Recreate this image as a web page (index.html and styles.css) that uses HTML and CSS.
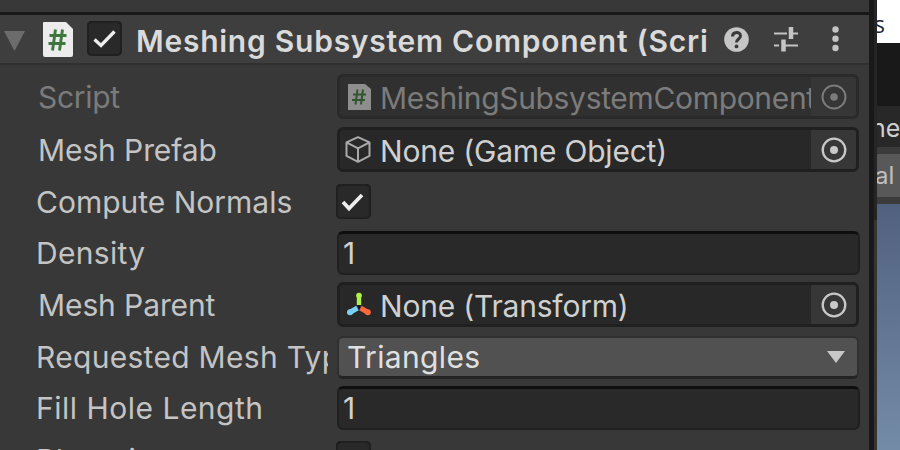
FILE: index.html
```html
<!DOCTYPE html>
<html lang="en">
<head>
<meta charset="utf-8">
<title>Inspector</title>
<link rel="stylesheet" href="styles.css">
</head>
<body>
<div class="app">
  <main class="inspector">
    <header class="head">
      <svg class="fold" width="22" height="20" viewBox="0 0 22 20"><path d="M0 0h21L10.500 20z" fill="#6c6c6c"/></svg>
      <svg class="file" width="30" height="35" viewBox="0 0 30 35"><path d="M1 0h22l7 7v26q0 2-2 2H2q-2 0-2-2V1q0-1 1-1z" fill="#ececec"/><path d="M12.500 7.500l-3 21M19.500 7.500l-3 21M6.500 13.500h17M5.500 21.500h17" stroke="#40753f" stroke-width="2.900"/></svg>
      <span class="check"><svg width="35" height="35" viewBox="0 0 35 35"><path d="M7.500 18.500l6.500 6 13.500-14" fill="none" stroke="#eee" stroke-width="3.300"/></svg></span>
      <h1 class="title">Meshing Subsystem Component (Scri</h1>
      <svg class="help" width="25" height="25" viewBox="0 0 25 25"><circle cx="12.500" cy="12.500" r="12.300" fill="#c6c6c6"/><path d="M8.500 9.500c0-5 8-5.500 8-.7 0 3.200-4 3.200-4 6.700" fill="none" stroke="#3b3b3b" stroke-width="3"/><circle cx="12.500" cy="19.400" r="1.900" fill="#3b3b3b"/></svg>
      <svg class="sliders" width="25" height="25" viewBox="0 0 25 25"><path d="M0 6.500h13M17 6.500h7M0 18.500h5M9 18.500h15" stroke="#c4c4c4" stroke-width="2"/><path d="M17 0v12M9.500 12.500v12" stroke="#c4c4c4" stroke-width="4.500"/></svg>
      <svg class="more" width="7" height="26" viewBox="0 0 7 26"><g fill="#c4c4c4"><circle cx="3.500" cy="3.500" r="3.200"/><circle cx="3.500" cy="12.800" r="3.200"/><circle cx="3.500" cy="22" r="3.200"/></g></svg>
    </header>
    <section class="rows">
      <div class="row disabled"><label class="label l-script">Script</label>
        <div class="field object"><svg class="icon i-file" width="23" height="26" viewBox="0 0 23 26"><path d="M0 0h17l6 5v21H0z" fill="#8e8e8e"/><path d="M9.500 5.500l-2 15M15 5.500l-2 15M5 10.500h13M4 16h13" stroke="#31562f" stroke-width="2"/></svg><span class="value v-script">MeshingSubsystemComponent</span><span class="pick"><svg width="26" height="26" viewBox="0 0 26 26"><circle cx="13" cy="13" r="11.500" fill="none" stroke="currentColor" stroke-width="2"/><circle cx="13" cy="13" r="3.800" fill="currentColor"/></svg></span></div></div>
      <div class="row r-prefab"><label class="label l-prefab">Mesh Prefab</label>
        <div class="field object"><svg class="icon" width="26" height="27" viewBox="0 0 26 27"><path d="M13 1.200l11.500 5.200v13.500L13 25.800 1.500 19.900V6.400zM1.500 6.400L13 12.400l11.500-6M13 12.400v13.400" fill="none" stroke="#a9a9a9" stroke-width="2" stroke-linejoin="round"/></svg><span class="value v-prefab">None (Game Object)</span><span class="pick"><svg width="26" height="26" viewBox="0 0 26 26"><circle cx="13" cy="13" r="11.300" fill="none" stroke="currentColor" stroke-width="2.300"/><circle cx="13" cy="13" r="4" fill="currentColor"/></svg></span></div></div>
      <div class="row r-normals"><label class="label l-normals">Compute Normals</label>
        <span class="check"><svg width="35" height="35" viewBox="0 0 35 35"><path d="M7 18l6 6.500 13-13.500" fill="none" stroke="#eee" stroke-width="3.700"/></svg></span></div>
      <div class="row r-density"><label class="label l-density">Density</label>
        <div class="field number"><span class="value">1</span></div></div>
      <div class="row r-parent"><label class="label l-parent">Mesh Parent</label>
        <div class="field object"><svg class="icon" width="26" height="26" viewBox="0 0 26 26"><path d="M14 6v10M14 16L6 20.500M14 16l8 4.500" stroke="#171717" stroke-width="2"/><path d="M14 3v10" stroke="#aff04b" stroke-width="4.400"/><circle cx="14" cy="3.500" r="2.800" fill="#aff04b"/><path d="M12.500 16L5.500 20" stroke="#79d1fa" stroke-width="5"/><circle cx="5" cy="20.300" r="3" fill="#79d1fa"/><path d="M15.500 16l7 4.200" stroke="#fb683c" stroke-width="5"/><circle cx="22.800" cy="20.300" r="3" fill="#fb683c"/></svg><span class="value v-parent">None (Transform)</span><span class="pick"><svg width="26" height="26" viewBox="0 0 26 26"><circle cx="13" cy="13" r="11.300" fill="none" stroke="currentColor" stroke-width="2.300"/><circle cx="13" cy="13" r="4" fill="currentColor"/></svg></span></div></div>
      <div class="row r-type"><label class="label l-type">Requested Mesh Type</label>
        <div class="field dropdown"><span class="value v-type">Triangles</span><svg class="arrow" width="18" height="12" viewBox="0 0 18 12"><path d="M0 0h18L9 12z" fill="#c8c8c8"/></svg></div></div>
      <div class="row r-fill"><label class="label l-fill">Fill Hole Length</label>
        <div class="field number"><span class="value">1</span></div></div>
      <div class="row r-planar"><label class="label l-planar">Planarity</label><span class="check"></span></div>
    </section>
  </main>
  <div class="divider"></div>
  <div class="edge"></div>
  <aside class="scene">
    <div class="browser">s</div>
    <div class="black"></div>
    <div class="tab">ne</div>
    <div class="tool">al</div>
    <div class="sky"></div>
  </aside>
</div>
</body>
</html>
```
FILE: styles.css
```css
* { box-sizing: border-box; }
body { margin: 0; overflow: hidden; background: #383838; font-family: Inter, "Liberation Sans", sans-serif; }
svg { display: block; flex: none; }
.app { display: flex; width: 900px; height: 450px; overflow: hidden; }
.inspector { width: 869px; height: 450px; padding-top: 12px; overflow: hidden; color: #c4c4c4; }
.head { display: flex; align-items: flex-start; height: 53px; border-top: 3px solid #191919; border-bottom: 2px solid #303030; background: #3e3e3e; }
.fold { margin: 16px 0 0 4px; }
.file { margin: 7px 0 0 17px; }
.check { display: block; flex: none; width: 35px; height: 35px; border-radius: 5px; background: #292929; box-shadow: inset 0 0 0 2px #202020, inset 0 2px 0 #111; }
.head .check { margin: 6px 0 0 14px; }
.title { width: 575px; margin: 6px 0 0 14px; font-size: 30px; line-height: 40px; font-weight: 600; letter-spacing: 0.75px; white-space: nowrap; color: #dadada; }
.help { margin: 12px 0 0 13px; }
.sliders { margin: 12px 0 0 25px; }
.more { margin: 11px 0 0 33px; }
.rows { padding-top: 6px; }
.row { display: flex; align-items: flex-start; height: 52px; padding-top: 3px; }
.label { flex: none; width: 292px; height: 44px; margin: 0 8px 0 36px; overflow: hidden; font-size: 30px; line-height: 44px; white-space: nowrap; }
.field { display: flex; align-items: center; width: 522px; height: 45px; margin-left: 1px; border-radius: 6px; background: #292929; font-size: 30px; line-height: 44px; white-space: nowrap; overflow: hidden; }
.object { border: 3px solid #202020; background: #282828; }
.icon { margin-left: 5px; }
.i-file { margin-left: 8px; }
.value { flex: 1; min-width: 0; overflow: hidden; }
.object .value { padding: 3px 0 0 9px; }
.pick { display: flex; flex: none; align-items: center; justify-content: center; width: 45px; height: 39px; background: #373737; color: #c8c8c8; }
.number { width: 523px; height: 44px; border: 2px solid #202020; border-top: 3px solid #0e0e0e; padding: 0 0 2px 4px; }
.dropdown { height: 43px; border: 2px solid #303030; border-bottom: 3px solid #242424; background: #515151; padding-left: 8px; color: #e0e0e0; }
.arrow { margin-right: 12px; }
.disabled { color: #7b7b7b; }
.object, .number { color: #d0d0d0; }
.disabled .object { border-color: #2a2a2a; background: #303030; color: #7b7b7b; }
.disabled .pick { background: #363636; color: #7b7b7b; }
.l-script, .l-prefab, .l-parent { width: 290px; margin-left: 38px; padding-top: 1px; letter-spacing: -0.1px; }
.l-script { letter-spacing: -0.3px; }
.l-normals { letter-spacing: 0; }
.l-density { letter-spacing: 0.3px; }
.l-type { margin-top: -1px; letter-spacing: 0.3px; }
.l-fill { letter-spacing: 0.5px; }
.v-script { letter-spacing: -0.33px; }
.v-prefab, .v-parent { letter-spacing: -0.2px; }
.v-type { letter-spacing: 0.35px; }
.r-prefab, .r-density { padding-top: 4px; }
.r-normals { padding-top: 9px; }
.r-normals .label { margin-top: -4px; }
.r-type { padding-top: 5px; }
.r-planar { padding-top: 6px; }
.l-planar { margin-top: -3px; letter-spacing: 0.5px; }
.divider { width: 5px; background: #191919; }
.edge { width: 3px; background: linear-gradient(#252525 220px, #373434 220px); }
.scene { display: flex; flex-direction: column; width: 23px; overflow: hidden; white-space: nowrap; }
.browser { height: 43px; padding-top: 8px; background: #fff; color: #182638; font: 23px/32px "Open Sans", sans-serif; text-indent: -3px; }
.black { height: 63px; background: #191919; }
.tab { height: 41px; background: #282828; color: #d0d0d0; font-size: 25px; line-height: 45px; text-indent: -6px; }
.tool { height: 57px; border-top: 7px solid #3b3b3b; border-bottom: 7px solid #3b3b3b; background: #585858; color: #c0c0c0; font-size: 24px; line-height: 44px; text-indent: -2px; }
.sky { flex: 1; background: linear-gradient(#50617f, #748ba8); }
```
